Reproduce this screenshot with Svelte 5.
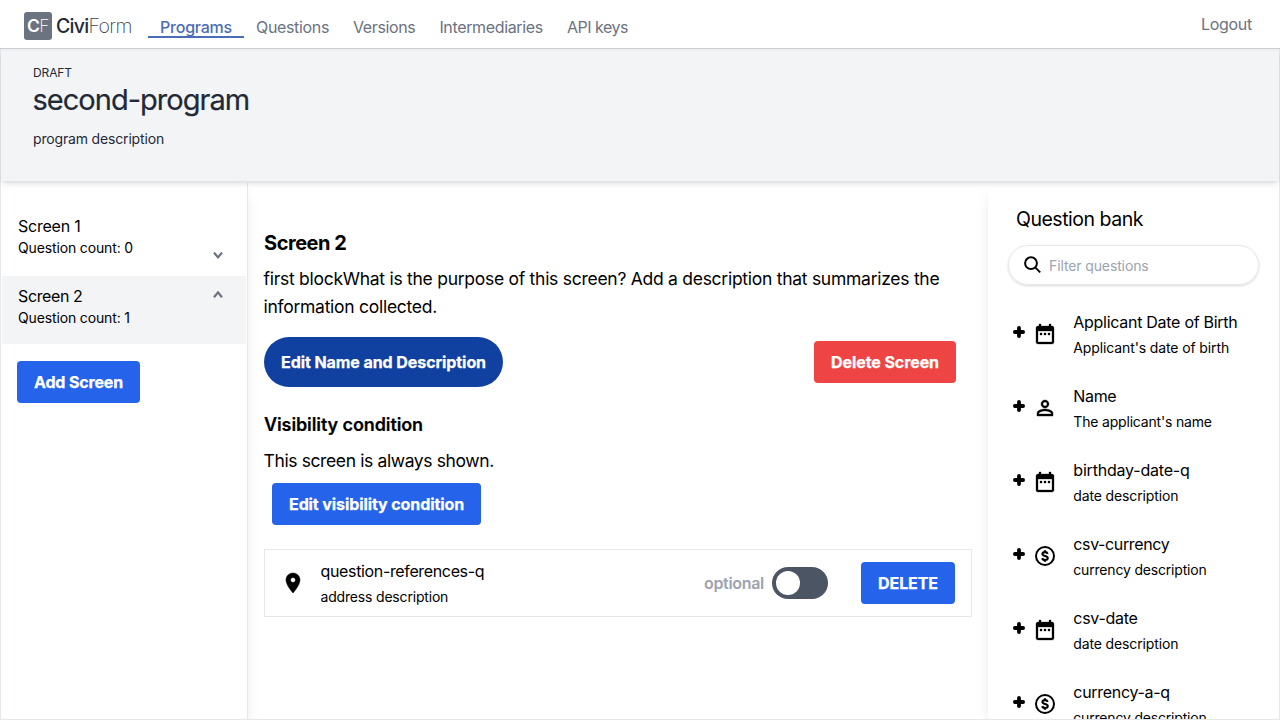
<script>
  const nav = [
    { label: 'Programs', ls: -0.22, active: true },
    { label: 'Questions', ls: -0.341 },
    { label: 'Versions', ls: -0.38 },
    { label: 'Intermediaries', ls: -0.345 },
    { label: 'API keys', ls: -0.47 }
  ];

  const bank = [
    { icon: 'date', title: 'Applicant Date of Birth', desc: "Applicant's date of birth", ls: -0.28, ds: -0.12 },
    { icon: 'name', title: 'Name', desc: "The applicant's name", ls: -0.346, ds: -0.182 },
    { icon: 'date', title: 'birthday-date-q', desc: 'date description', ls: -0.2, ds: -0.137 },
    { icon: 'currency', title: 'csv-currency', desc: 'currency description', ls: -0.378, ds: -0.185 },
    { icon: 'date', title: 'csv-date', desc: 'date description', ls: -0.28, ds: -0.137 },
    { icon: 'currency', title: 'currency-a-q', desc: 'currency description', ls: -0.3, ds: -0.185 }
  ];
</script>

<div class="page">
  <header>
    <div class="logo">
      <span class="mark"><b>C</b><i>F</i></span>
      <span class="word"><b>Civi</b><i>Form</i></span>
    </div>
    <nav>
      {#each nav as item}
        <a class:active={item.active} style="letter-spacing:{item.ls}px">{item.label}</a>
      {/each}
    </nav>
    <a class="logout">Logout</a>
  </header>

  <main>
    <section class="program">
      <p class="status">DRAFT</p>
      <h1>second-program</h1>
      <p class="about">program description</p>
    </section>

    <div class="columns">
      <aside class="screens">
        <div class="screen">
          <div>
            <p class="name" style="letter-spacing:-0.223px">Screen 1</p>
            <p class="count">Question count: 0</p>
          </div>
          <svg class="down" width="10" height="7" viewBox="0 0 10 7"><path d="M1 .6 5 5.400 9 .6" /></svg>
        </div>
        <div class="screen selected">
          <div>
            <p class="name" style="letter-spacing:-0.379px">Screen 2</p>
            <p class="count">Question count: 1</p>
          </div>
          <svg class="up" width="10" height="7" viewBox="0 0 10 7"><path d="M1 6.200 5 1.400 9 6.200" /></svg>
        </div>
        <button class="btn add">Add Screen</button>
      </aside>

      <section class="editor">
        <h2>Screen 2</h2>
        <p class="body">first blockWhat is the purpose of this screen? Add a description that summarizes the<br />information collected.</p>
        <div class="actions">
          <button class="btn pill">Edit Name and Description</button>
          <button class="btn danger">Delete Screen</button>
        </div>
        <h3>Visibility condition</h3>
        <p class="body shown">This screen is always shown.</p>
        <button class="btn visibility">Edit visibility condition</button>

        <div class="question">
          <svg class="pin" width="24" height="24" viewBox="0 0 24 24"><path d="M12 2C8.130 2 5 5.130 5 9c0 5.250 7 13 7 13s7-7.750 7-13c0-3.870-3.130-7-7-7zm0 9.500a2.500 2.500 0 0 1 0-5 2.500 2.500 0 0 1 0 5z" /></svg>
          <div class="text">
            <p class="title" style="letter-spacing:-0.35px">question-references-q</p>
            <p class="desc" style="letter-spacing:-0.18px">address description</p>
          </div>
          <span class="optional">optional</span>
          <span class="toggle"><span class="knob"></span></span>
          <button class="btn delete">DELETE</button>
        </div>
      </section>

      <aside class="bank">
        <h2>Question bank</h2>
        <div class="search">
          <svg width="18" height="18" viewBox="0 0 18 18"><circle cx="7" cy="7.200" r="5.900" /><path d="m11.200 11.400 5 5" /></svg>
          <span>Filter questions</span>
        </div>
        {#each bank as q}
          <div class="entry">
            <svg class="plus" width="12" height="12" viewBox="0 0 12 12"><path d="M6 1.900V10.100M1.900 6H10.100" /></svg>
            <svg class="kind" width="24" height="24" viewBox="0 0 24 24">
              {#if q.icon === 'date'}
                <path d="M9 11H7v2h2v-2zm4 0h-2v2h2v-2zm4 0h-2v2h2v-2zm2-7h-1V2h-2v2H8V2H6v2H5c-1.110 0-1.990.9-1.990 2L3 20c0 1.100.89 2 2 2h14c1.100 0 2-.9 2-2V6c0-1.100-.9-2-2-2zm0 16H5V9h14v11z" />
              {:else if q.icon === 'name'}
                <path class="person" d="M12 5.900a2.100 2.100 0 1 1 0 4.200 2.100 2.100 0 0 1 0-4.200m0 9c2.970 0 6.100 1.460 6.100 2.100v1.100H5.900V17c0-.64 3.130-2.100 6.100-2.100M12 4C9.790 4 8 5.790 8 8s1.790 4 4 4 4-1.790 4-4-1.790-4-4-4zm0 9c-2.670 0-8 1.340-8 4v3h16v-3c0-2.660-5.330-4-8-4z" />
              {:else}
                <circle class="ring" cx="12" cy="12" r="9" />
                <path class="coin" d="M14.700 9.800C14.300 8.700 13.300 8.100 12.050 8.100c-1.500 0-2.600.7-2.600 1.850 0 2.750 5.300 1.250 5.300 4.050 0 1.200-1.100 1.950-2.700 1.950-1.400 0-2.500-.65-2.850-1.850M12 6.300V8M12 16v1.700" />
              {/if}
            </svg>
            <div class="text">
              <p class="title" style="letter-spacing:{q.ls}px">{q.title}</p>
              <p class="desc" style="letter-spacing:{q.ds}px">{q.desc}</p>
            </div>
          </div>
        {/each}
      </aside>
    </div>
  </main>
</div>

<style>
  :global(body) { margin: 0; background: #fff; }
  .page, .page * { box-sizing: border-box; }
  .page {
    width: 1280px; height: 720px; overflow: hidden;
    display: flex; flex-direction: column;
    font-family: Inter, "Liberation Sans", sans-serif;
    font-size: 16px; line-height: 24px; color: #000;
  }
  p, h1, h2, h3 { margin: 0; font-weight: 400; white-space: nowrap; }
  svg { display: block; flex: none; }

  header {
    height: 49px; flex: none; display: flex; align-items: flex-start;
    padding: 0 28px 0 24px; border-bottom: 1px solid #cbced2;
    color: #6b7280; position: relative; z-index: 3;
    box-shadow: 0 1px 2px rgba(0, 0, 0, .05);
  }
  .logo { display: flex; align-items: center; margin-top: 12px; height: 28px; width: 124px; }
  .logo b { font-weight: 400; }
  .logo i { font-style: normal; font-weight: 200; }
  .mark {
    width: 28px; height: 28px; border-radius: 3px; background: #6b7280; color: #fff;
    display: flex; justify-content: center; align-items: center; font-size: 17.500px; letter-spacing: -.6px;
  }
  .logo .mark b { font-weight: 600; }
  .word { margin-left: 4px; font-size: 19.500px; letter-spacing: -.62px; color: #1f2937; }
  .logo .word b { font-weight: 450; letter-spacing: -.72px; }
  .word i { color: #374151; }
  nav { display: flex; margin-top: 14px; }
  nav a { height: 24px; padding: 1px 12px 0; line-height: 25px; white-space: nowrap; }
  nav a.active { font-weight: 500; color: #4b6cb7; border-bottom: 2px solid #4b6cb7; }
  .logout { margin: 12px 0 0 auto; letter-spacing: -.29px; }

  main { flex: 1; min-height: 0; display: flex; flex-direction: column; border: 1px solid #e5e7eb; border-top: 0; }
  .program {
    height: 132px; flex: none; padding: 16px 32px; background: #f3f4f6; color: #1f2937;
    position: relative; z-index: 2;
    box-shadow: 0 4px 6px -1px rgba(0, 0, 0, .1), 0 2px 4px -1px rgba(0, 0, 0, .06);
  }
  .status { font-size: 12px; line-height: 16px; letter-spacing: -.098px; }
  h1 { font-size: 29px; line-height: 36px; margin: 1px 0 0 -.5px; letter-spacing: -.98px; -webkit-text-stroke: .2px #1f2937; }
  .about { font-size: 14px; line-height: 20px; margin-top: 11px; letter-spacing: -.165px; }

  .columns { flex: 1; min-height: 0; display: flex; overflow: hidden; padding-top: 2px; }
  .screens {
    width: 247px; flex: none; padding: 23px 1px 0; border-right: 1px solid #e5e7eb;
    box-shadow: 0 10px 15px -3px rgba(0, 0, 0, .1), 0 4px 6px -2px rgba(0, 0, 0, .05);
  }
  .screen { height: 68px; margin-bottom: 2px; padding: 8px 23px 0 16px; display: flex; justify-content: space-between; }
  .selected { background: #f3f4f6; margin-bottom: 0; }
  .screen svg { fill: none; stroke: #6b7280; stroke-width: 2.200; }
  .down { margin-top: 38px; }
  .up { margin: 7px .5px 0 0; }
  .count { font-size: 14px; line-height: 20px; letter-spacing: -.143px; }

  .btn {
    display: block; height: 42px; padding: 0 16px; border: 1px solid transparent; border-radius: 4px;
    background: #2563eb; background-clip: border-box; background-origin: border-box; color: #fff;
    font: 700 16px/24px Inter, "Liberation Sans", sans-serif; white-space: nowrap; text-align: center;
    -webkit-text-stroke: .25px #fff;
  }
  .add { width: 123px; margin: 17px 0 0 15px; letter-spacing: -.158px; }

  .editor { width: 740px; flex: none; padding: 46px 16px 0; }
  .editor h2 { font-size: 20px; line-height: 28px; font-weight: 700; letter-spacing: -.454px; }
  .body { margin: 8px 0 0 -.5px; font-size: 17.500px; line-height: 28px; letter-spacing: -.27px; }
  .shown { letter-spacing: -.38px; }
  .actions { display: flex; justify-content: space-between; align-items: center; margin: 16px 16px 0 0; }
  .pill { width: 239px; height: 50px; border-radius: 25px; background: #1040a0; letter-spacing: -.072px; }
  .danger { width: 142px; background: #ef4444; letter-spacing: -.078px; }
  h3 { margin-top: 24px; font-size: 18px; line-height: 28px; font-weight: 600; letter-spacing: -.104px; -webkit-text-stroke: .2px #000; }
  .visibility { width: 209px; margin: 8px 0 0 8px; letter-spacing: -.093px; }

  .question {
    margin-top: 24px; height: 68px; border: 1px solid #e5e7eb; padding: 0 16px;
    display: flex; align-items: center;
  }
  .pin { stroke: #000; stroke-width: .5; }
  .text { display: flex; flex-direction: column; }
  .title { line-height: 24px; }
  .desc { font-size: 14px; line-height: 20px; margin-top: 4px; }
  .question .text { margin-left: 15.500px; width: 383.500px; padding-bottom: 1px; }
  .optional { width: 68px; color: #9ca3af; font-weight: 600; letter-spacing: -.309px; }
  .toggle { width: 56px; height: 32px; border-radius: 16px; background: #4b5563; padding: 4px; display: flex; }
  .knob { width: 24px; height: 24px; border-radius: 50%; background: #fff; }
  .delete { width: 94px; margin-left: 33px; letter-spacing: -.073px; }

  .bank {
    flex: 1; padding: 22px 20px 0; background: #fff; overflow: visible;
    box-shadow: 0 10px 15px -3px rgba(0, 0, 0, .1), 0 4px 6px -2px rgba(0, 0, 0, .05);
  }
  .bank h2 { margin-left: 8px; font-size: 19.500px; line-height: 28px; letter-spacing: -.48px; }
  .search {
    width: 251px; height: 40px; margin: 12px 0 25px; padding-left: 15px; border: 1px solid #e5e7eb; border-radius: 20px;
    box-shadow: 0 1px 3px rgba(0, 0, 0, .1), 0 1px 2px rgba(0, 0, 0, .06);
    display: flex; align-items: center; font-size: 14px; color: #9ca3af; letter-spacing: -.12px;
  }
  .search svg { fill: none; stroke: #000; stroke-width: 2; }
  .search span { margin-left: 7px; padding-top: 1px; }
  .entry { height: 74px; display: flex; align-items: flex-start; padding-left: 5px; }
  .plus { margin-top: 16px; fill: none; stroke: #000; stroke-width: 3.800; stroke-linecap: round; }
  .kind { margin: 12px 0 0 8px; stroke: #000; stroke-width: .3; }
  .person { stroke-width: .4; }
  .ring { fill: none; stroke-width: 2; }
  .coin { fill: none; stroke-width: 2.100; }
  .entry .text { margin-left: 16.300px; }
</style>
